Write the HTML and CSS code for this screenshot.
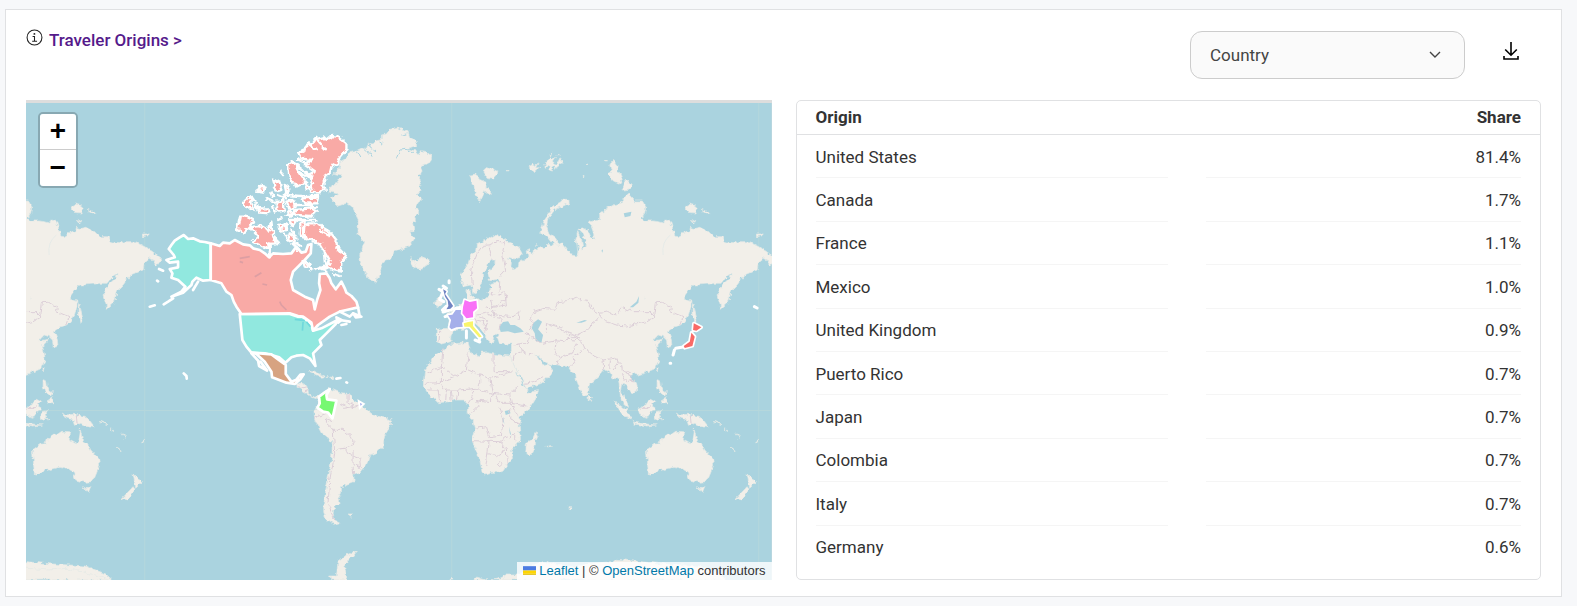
FILE: index.html
```html
<!DOCTYPE html>
<html lang="en">
<head>
<meta charset="utf-8">
<title>Traveler Origins</title>
<link rel="stylesheet" href="styles.css">
</head>
<body>
<main class="card">
  <header class="card-header">
    <div class="title">
      <svg class="info-icon" viewBox="0 0 16 16" aria-hidden="true"><circle cx="8" cy="8" r="7"/><path d="M6.2 7H8v4.5M5.800 11.500h4.600"/><circle class="dot" cx="7.900" cy="4.600" r=".9"/></svg>
      <a class="title-link" href="#origins">Traveler Origins &gt;</a>
    </div>
    <div class="actions">
      <div class="select-wrap">
        <select class="select" aria-label="Origin level"><option>Country</option><option>State</option></select>
        <svg class="chevron" viewBox="0 0 12 8" aria-hidden="true"><path d="M1 1l5 5 5-5"/></svg>
      </div>
      <button class="download" type="button" aria-label="Download">
        <svg viewBox="0 0 16 18" aria-hidden="true"><path d="M8 0v13M2.200 7.500L8 13.200l5.800-5.700M1 14v3h14v-3"/></svg>
      </button>
    </div>
  </header>
  <div class="content">
    <section class="map" aria-label="Map of traveler origins">
      <svg class="map-canvas" viewBox="26 100 746 480" preserveAspectRatio="xMidYMid slice" aria-hidden="true">
        <defs>
          <filter id="coast" x="-5%" y="-5%" width="110%" height="110%">
            <feTurbulence type="fractalNoise" baseFrequency=".07" numOctaves="2" seed="4"/>
            <feDisplacementMap in="SourceGraphic" scale="16" xChannelSelector="R" yChannelSelector="G"/>
          </filter>
          <g id="east" transform="translate(400 220) scale(.33333)">
            <g class="land">
              <path d="M183 170L190 150 205 130 213 105 228 92 230 75 245 68 250 60 262 58 275 48 285 52 292 44 303 50 315 58 335 72 358 85 367 100 362 112 345 117 325 112 335 125 333 140 342 146 355 140 358 125 372 122 385 112 382 90 390 86 395 100 403 98 405 88 430 82 445 73 460 76 463 65 475 70 485 66 498 82 515 105 530 108 538 90 528 60 534 35 545 60 550 88 560 75 552 45 535 28 548 24 565 32 575 55 586 60 580 35 570 5 600 0 600-18 622-35 642-45 668-52 678-72 686-78 705-57 728-57 738-40 735-22 725-5 735 3 760 3 775 5 792 10 798 0 812 5 818 25 822 48 835 50 850 40 870 35 872 22 885 25 900 22 920 32 930 35 945 50 970 50 975 65 1000 68 1020 65 1050 65 1080 80 1103 97 1127 115 1112 137 1100 120 1090 115 1077 125 1072 150 1032 167 1012 195 992 215 982 250 964 265 952 225 967 195 992 172 994 160 977 172 964 190 942 190 920 193 882 195 865 212 850 235 877 245 872 265 867 285 855 305 842 315 822 322 806 333 815 360 817 378 803 382 800 360 790 350 775 345 760 362 790 358 770 378 775 398 778 420 765 445 735 458 715 465 700 460 692 472 710 492 714 508 697 522 690 510 675 495 668 492 665 512 672 530 684 548 686 565 672 553 662 530 658 490 655 475 640 480 632 458 615 448 605 460 590 475 568 495 567 515 555 530 545 517 530 480 528 462 515 455 505 440 475 435 450 432 435 425 405 402 415 415 428 433 438 437 442 427 460 452 442 475 425 490 378 506 372 485 350 450 335 420 330 412 338 395 338 372 320 372 300 372 292 350 300 340 292 338 282 348 278 372 262 357 255 345 240 322 220 305 205 318 192 327 165 330 155 345 150 365 125 372 110 362 110 328 145 325 150 290 135 285 150 278 180 255 200 245 205 225 198 215 210 208 215 230 235 240 265 235 265 215 280 205 270 190 300 186 298 178 270 182 266 165 275 145 287 125 275 118 265 128 262 145 248 160 248 190 230 215 220 220 213 195 190 200Z"/>
              <path d="M150 372L205 368 210 385 215 400 240 410 245 400 260 398 300 405 330 408 340 430 355 465 370 495 385 517 416 512 410 530 385 570 362 592 358 612 362 660 335 690 338 715 320 735 310 750 295 757 270 757 255 762 248 758 240 720 230 692 218 660 226 630 220 605 205 580 207 555 190 540 165 540 150 545 115 548 85 520 70 498 75 450 90 430 105 405 125 395Z"/>
              <path d="M378 700L380 668 398 658 408 635 413 650 405 680 392 706ZM105 255L105 245 120 232 128 245 120 260ZM33 118L48 125 72 112 86 130 62 148 42 142ZM438-8L422 35 432 48 448 55 460 70 480 78 468 55 448 40 440 20 445-5 465-30 508-50 508-62 492-62 455-35ZM210-135L235-138 238-122 262-112 258-98 278-80 270-75 255-88 240-55 225-85ZM250-148L262-158 295-142 280-125 262-128ZM388-160L400-168 402-160 415-170 408-158 420-155 405-150 400-145ZM435-170L448-178 450-188 456-180 470-188 460-172 468-168 455-158 462-150 450-152 446-162 440-158ZM464-165L478-172 484-184 490-172 480-165 468-155ZM450-198L458-200 456-194ZM474-196L482-196ZM640-180L650-172 655-160 650-145 660-140 668-120 660-108 640-118 625-140 635-145 630-165ZM680-122L695-105 690-92 667-90ZM858-42L870-48 885-44 896-34 885-18 865-20ZM905-32L928-22 922-18 908-24ZM875-2L888 5 885 10ZM1070 42L1088 42 1086 48 1070 50ZM880 250L892 300 886 308 880 280ZM565 525L575 535 570 543 565 538ZM770 445L778 438 776 455ZM772 478L782 482 785 505 800 515 795 525 778 515 772 500ZM785 540L800 530 803 548 790 548ZM642 543L660 555 690 580 698 600 672 590ZM697 606L740 612 770 615 740 618 705 612ZM715 565L738 558 752 538 765 545 758 555 762 565 745 592 720 585ZM768 575L788 572 775 580 778 588 790 600 780 595 772 605 766 590ZM830 576L840 585 865 583 900 590 912 605 925 622 905 620 885 610 868 618 862 600 840 592ZM740 690L765 672 780 672 785 655 805 642 812 645 828 634 855 635 852 650 850 660 872 672 880 655 884 630 890 660 905 670 915 690 938 715 942 735 928 770 920 785 895 787 870 780 862 755 850 748 822 742 795 748 770 755 752 762 746 760ZM895 800L904 806 916 800 908 820ZM1042 762L1058 778 1070 785 1050 805ZM1042 800L1048 808 1025 840 1008 836ZM508 860L516 860 514 868 508 868ZM150 1080L155 1075 160 1080ZM222 1080L230 1072 260 1080 295 1078 320 1065 360 1065 400 1035 430 1025 470 1035 520 1040 580 1030 640 1025 650 1018 675 1020 720 1025 800 1032 900 1038 960 1062 980 1080Z"/>
              <path d="M700 1080L702 1045 725 1045 790 1050 845 1045 900 1058 950 1070 975 1080Z"/>
              <path class="specks" d="M995 683l10 8M1066 668l10-8M945 605l20 8M975 625l8 8M1010 640l8 14M320-148h4M560-167h4M548-130h4M618-178h4M408 75h4M440 680l14-2M735 235v2"/>
            </g>
            <g class="sea">
              <path d="M298 320L310 306 325 304 332 315 345 315 362 325 372 335 345 340 325 334 303 336ZM400 310L415 298 427 305 415 328 430 345 425 368 408 362 405 340 396 325ZM690 262L710 245 718 228 716 248 700 262ZM530 308L555 300 562 302 545 308ZM315 573L330 570 332 580 318 585ZM310 590L314 612 308 600ZM328 620L335 648 330 640ZM672-20L695-25 692-12 675-8ZM605 92L610 88 608 98Z"/>
              <path class="river" d="M790 105Q785 65 812 45M530 60L535 105"/>
            </g>
            <g class="borders">
              <path d="M218 195Q210 150 225 120 240 70 268 75L290 65 315 65 308 100 318 150 300 170M268 80L278 120M270 220L300 225 315 215 320 255 280 262 272 240M300 185L298 215M280 262L285 285 340 290 358 275 355 300M230 285L260 280 280 290 305 295 298 330M230 300L250 305 260 330M240 290L265 300 255 335M320 225L318 240 278 262M392 330L400 310 392 295 400 275 430 265 465 268 475 245 500 242 530 232 545 242 560 240 575 265 600 280 590 305 570 318 560 332 530 345 500 335 470 320 440 310 440 335M600 280L625 275 650 285 665 262 700 275 750 275 765 290 740 305 680 318 650 315 620 305 600 285M765 285L770 248 785 247 815 260 812 275 850 290 840 315M430 370L470 362 490 365 510 355 515 340 550 370 555 382 540 400 520 410 525 430 505 440M470 362L465 395 480 415 470 435M480 415L515 400 530 370M500 342L515 350 540 350 525 360 505 358M552 382L580 405 610 420 645 415 665 435 668 450 690 455M610 420L612 450M632 420L630 445M650 415L655 430 640 450M665 460L680 485 705 480M675 455L690 462 700 490M345 375L362 370 385 370 390 345 375 340M360 372L365 392 345 400 340 420M365 392L385 405 400 402M385 345L425 370M375 490L400 485 430 470M120 330L118 365M220 280L232 310M255 260L275 270 285 285"/>
              <path d="M130 385L125 440 80 460M125 440L165 470 200 450 205 400M205 450L240 465 270 475 335 455M283 403L283 455 330 455M240 465L240 490 230 505 275 520 330 525 355 500M270 475L278 520M75 490L120 488 165 470M125 440L125 488M120 488L135 510 180 510 230 505M85 510L115 510 120 545M140 510L138 540M155 510L157 540M175 510L170 540M225 510L215 535 205 550M230 540L275 545 280 520M230 540L235 560 215 578M330 525L335 550 380 558M335 550L358 595M285 520L300 550 335 550M225 625L260 620 270 650 305 645 310 600 300 560M218 662L300 665 320 650M268 662L265 695 258 738M265 700L290 710 320 690 322 735M300 665L320 690M292 732L300 725 308 732 300 740ZM330 565L330 600 358 612M330 655L345 640 345 665M875 585L877 615M725 565L745 565 755 550"/>
            </g>
          </g>
        </defs>
        <rect class="void" x="26" y="100" width="746" height="480"/>
        <rect class="ocean" x="26" y="103" width="746" height="477"/>
        <path class="grid" d="M145 103v477M452 103v477M759 103v477M26 410.500h746"/>
        <use href="#east"/>
        <use href="#east" x="-614"/>
        <g transform="translate(230 120) scale(.33333)">
          <g class="land">
            <path d="M293 205L320 190 335 168 310 162 330 145 330 125 350 115 358 95 380 92 400 82 410 88 415 70 430 72 440 62 455 60 455 45 470 42 480 28 505 24 535 35 540 52 560 65 560 78 530 85 558 92 565 108 572 92 590 95 607 110 600 128 575 135 580 155 565 165 575 180 566 195 574 210 562 220 572 240 560 260 567 280 554 292 558 302 548 308 553 335 540 335 555 355 545 370 535 380 520 385 495 392 490 405 480 420 460 425 450 455 440 487 415 475 400 445 392 425 390 405 405 365 385 345 385 295 370 265 350 250 325 258 302 235 325 222 298 215ZM543 415L560 425 575 412 590 415 597 430 575 447 552 440 558 430Z"/>
            <path d="M190 785L215 790 235 800 235 818 255 832 270 825 285 818 300 805 330 818 355 820 370 840 405 865 430 885 460 892 485 900 485 915 465 945 460 980 445 995 420 1005 410 1035 390 1060 372 1065 373 1085 335 1100 335 1120 325 1135 328 1150 312 1162 310 1180 315 1200 330 1208 312 1213 290 1200 282 1180 282 1150 290 1100 300 1050 307 1000 307 965 275 940 255 900 253 875 270 840 248 832 225 815 200 798ZM235 752L255 752 285 770 280 775ZM290 770L310 772 305 780ZM355 1182L370 1182 362 1188ZM380 1292L350 1305 325 1325 320 1365 300 1365 303 1380 353 1380 345 1340Z"/>
            <path class="faint" d="M500 115L510 90 530 88 550 96M418 70L422 85 436 92M400 85L412 98 425 100 430 110M383 95L390 108M445 62L458 72M515 45L530 42"/>
          </g>
          <g class="borders"><path d="M200 790L212 805 235 800M225 815L235 812M253 895L290 880 315 870M355 820L355 850 375 860M330 850L350 860M340 865L395 855M310 905L290 895 290 910 310 928 340 928 365 950 372 975 345 980M320 988L345 985 350 1000 390 1015 392 1040 370 1035 370 990M310 925L315 1000 300 1080 295 1150 315 1200M375 1035L392 1045M370 1040L372 1065"/></g>
          <g class="us">
            <path d="M-57 370L-75 366-90 364-110 355-125 357-138 345-150 352-165 362-175 375-183 387-168 405-165 412-190 420-180 428-155 425-155 442-180 447-172 460-175 473-155 480-133 500-145 515-175 530-140 518-115 495-112 485-100 473-80 482-57 480Z"/>
            <path d="M30 582L180 582 205 590 218 590 245 612 250 632 275 625 318 603 318 612 290 640 270 660 275 675 250 700 257 738 240 715 220 705 200 707 185 712 167 728 148 712 125 705 105 700 65 698 50 680 38 660Z"/>
            <path class="island" d="M-212 447L-200 452M-218 482L-215 484M-240 560L-225 556M-198 553L-185 545-170 535M-138 760L-130 768-129 776M320 776L332 774M350 787L352 788M-95 485L-110 510"/>
          </g>
          <path class="mx" d="M68 698L125 703 145 718 168 735 168 762 185 785 200 779 212 764 222 763 212 778 195 792 170 788 127 772 125 755 105 725 80 702Z"/>
          <path class="mx island" d="M65 700L85 722 88 738 112 752 92 725"/>
          <path class="co" d="M285 817L300 807 290 825 292 838 320 842 315 865 308 895 295 878 280 875 263 863 270 850 268 830Z"/>
          <g class="ca">
            <path d="M-57 370L-30 378-20 368 0 370 15 360 40 373 60 376 70 385 90 390 105 400 118 412 130 400 160 402 185 400 200 380 215 398 228 395 235 375 245 372 243 400 225 420 205 440 190 455 183 480 190 510 225 530 250 540 255 568 262 540 272 510 268 490 270 462 290 460 300 475 305 490 318 508 335 485 345 505 350 518 365 528 380 545 385 562 350 570 330 575 300 590 265 615 250 632 245 608 220 590 205 588 180 580 35 582 20 560 12 545 5 525-10 515-25 490-57 480Z"/>
            <g class="rough">
              <path d="M205 100L225 90 225 80 245 72 255 58 280 52 290 62 305 48 325 50 350 70 350 88 330 110 325 130 305 140 300 160 285 170 280 195 285 210 265 218 240 215 250 190 235 165 255 155 225 135 245 120 212 115Z"/>
              <path d="M175 135L192 125 205 150 215 165 225 180 220 190 200 200 180 175ZM225 185L240 200 230 210ZM218 235L265 233 260 250 225 250ZM195 270L245 265 262 275 240 288 200 285ZM130 178L150 190 155 210 140 215ZM165 195L180 205 170 220ZM85 195L105 200 100 218 80 215 95 205ZM38 250L60 228 72 238 60 248 75 270 45 258ZM75 250L90 265 120 265 118 280 90 278ZM140 255L160 235 165 270 145 275ZM170 245L190 240 195 260 180 270ZM175 275L195 280 180 290ZM30 290L50 290 70 300 60 320 40 340 22 328ZM62 322L85 318 105 322 115 335 125 305 130 345 138 370 115 372 118 385 95 378 68 365 85 350ZM145 315L170 310 172 330 150 332ZM178 300L200 300 188 318ZM180 340L195 350 190 370 175 360ZM212 310L225 302 222 340 230 358 210 345ZM235 310L265 310 275 320 300 335 320 360 322 380 350 410 335 425 333 455 310 450 290 440 300 420 285 395 270 370 245 358 222 355 222 320ZM218 420L235 425 245 445 225 440ZM270 445L285 442 290 450Z"/>
              <path class="island" d="M205 118L240 135M200 135L225 155 245 170M235 70L260 90M265 62L285 85M215 160L245 175M185 120L190 135M152 155L160 165M125 215L130 230M72 235L78 245M110 235L130 245 150 245M130 258L135 275M145 225L170 235M165 225L215 228 265 228M195 255L250 255M170 285L200 285M155 325L175 312M145 300L155 295M165 340L170 355M185 330L200 355M205 300L260 300M120 370L120 412M135 350L145 370M190 365L205 395M200 370L215 380M225 425L245 448M255 450L280 440M250 368L275 370M285 400L290 440M310 462L330 468M240 260L260 262M235 290L250 290M270 330L300 345M320 385L335 400M275 195L290 180"/>
            </g>
            <path d="M320 592L335 600 325 608ZM370 580L395 590 378 592Z"/>
            <path class="island" d="M330 575L360 590 370 580M330 600L360 605M335 615L350 612M385 562L390 590"/>
          </g>
          <path class="lakes" d="M30 415L60 410M40 428L30 425M75 470L95 458M98 492L112 495M150 545L155 555 170 570"/>
          <path class="great" d="M195 598L225 602M220 606L218 632M230 605L242 620"/>
        </g>
        <g transform="translate(400 220) scale(.33333)">
          <path class="halo" d="M148 182V188M130 198L140 205M118 208L130 215 120 238 132 245M128 270L140 258M130 276L150 270 180 262M136 290L150 286M200 332V354M226 360L240 366M240 350L238 365M824 390L820 405M828 385L855 380M1064 260L1072 264M811 430H813"/>
          <path class="uk" d="M130 208L140 214 136 222 148 240 160 258 152 266 140 268 146 258 144 242 136 230Z"/>
          <path class="fr" d="M184 270L190 282 192 320 170 322 155 328 149 322 154 300 145 286 158 284 168 270Z"/>
          <path class="de" d="M195 240L210 246 230 242 232 265 220 275 220 292 200 295 188 280 190 260Z"/>
          <path class="it" d="M192 310L205 306 220 304 220 318 240 342 246 350 238 352 226 338 210 320 194 320Z"/>
          <path class="jp" d="M882 310L905 322 890 332 880 330ZM875 338L885 350 878 378 855 384 852 378 870 365Z"/>
        </g>
        <path class="guiana" d="M359 401l5 3-4 4z"/>
      </svg>
      <div class="zoom">
        <button class="zoom-button" type="button" aria-label="Zoom in">+</button>
        <button class="zoom-button" type="button" aria-label="Zoom out">−</button>
      </div>
      <div class="attribution">
        <a href="#leaflet"><svg class="flag" viewBox="0 0 12 8" aria-hidden="true"><path fill="#4c7be1" d="M0 0h12v4H0z"/><path fill="#ffd500" d="M0 4h12v3H0z"/><path fill="#e0bc00" d="M0 7h12v1H0z"/></svg> Leaflet</a> | © <a href="#osm">OpenStreetMap</a> contributors
      </div>
    </section>
    <section class="panel">
      <table class="origins">
        <thead><tr><th scope="col">Origin</th><th scope="col">Share</th></tr></thead>
        <tbody>
          <tr><td>United States</td><td>81.4%</td></tr>
          <tr><td>Canada</td><td>1.7%</td></tr>
          <tr><td>France</td><td>1.1%</td></tr>
          <tr><td>Mexico</td><td>1.0%</td></tr>
          <tr><td>United Kingdom</td><td>0.9%</td></tr>
          <tr><td>Puerto Rico</td><td>0.7%</td></tr>
          <tr><td>Japan</td><td>0.7%</td></tr>
          <tr><td>Colombia</td><td>0.7%</td></tr>
          <tr><td>Italy</td><td>0.7%</td></tr>
          <tr><td>Germany</td><td>0.6%</td></tr>
        </tbody>
      </table>
    </section>
  </div>
</main>
</body>
</html>
```
FILE: styles.css
```css
* { box-sizing: border-box; }
body {
  margin: 0;
  padding: 9px 15px 9px 5px;
  background: #f7f8fa;
  color: #333;
  font: 17px/24px Roboto, "Noto Sans", sans-serif;
}
.card {
  padding: 21px 20px 16px;
  border: 1px solid #e0e1e3;
  background: #fff;
}
.card-header {
  display: flex;
  justify-content: space-between;
  align-items: flex-start;
  margin-bottom: 21px;
}
.title { display: flex; gap: 6px; }
.info-icon {
  width: 17px;
  height: 17px;
  margin-top: -2px;
  fill: none;
  stroke: #222;
  stroke-width: 1;
}
.info-icon .dot { fill: #222; stroke: none; }
.title-link { color: #551a8b; font-weight: 500; line-height: 18px; text-decoration: none; }
.actions { display: flex; gap: 36px; }
.select-wrap { position: relative; width: 275px; }
.select {
  display: block;
  width: 100%;
  height: 48px;
  padding: 0 19px;
  appearance: none;
  border: 1px solid #ccc;
  border-radius: 12px;
  background: #fafafa;
  color: #444;
  font: inherit;
}
.chevron {
  position: absolute;
  top: 20px;
  right: 24px;
  width: 12px;
  height: 8px;
  fill: none;
  stroke: #444;
  stroke-width: 1.4;
  pointer-events: none;
}
.download {
  width: 20px;
  height: 40px;
  margin-right: 20px;
  padding: 0;
  border: 0;
  background: none;
}
.download svg { display: block; width: 16px; height: 18px; margin: 0 auto; fill: none; stroke: #000; stroke-width: 1.6; }

.content { display: grid; grid-template-columns: 1fr 1fr; gap: 24px; }
.map { position: relative; min-height: 480px; overflow: hidden; background: #ddd; }
.map-canvas { position: absolute; inset: 0; width: 100%; height: 100%; }
.void { fill: #ddd; }
.ocean { fill: #aad3df; }
.grid { fill: none; stroke: #b5d7dc; stroke-width: 1; }
.land { fill: #f2efe9; stroke: #e2e8e5; stroke-width: 2; stroke-linejoin: round; filter: url(#coast); }
.land .faint { fill: none; stroke: #aad3df; stroke-width: 3; }
.land .specks { fill: none; stroke: #dfe8e5; stroke-width: 4; stroke-linecap: round; }
.sea { fill: #aad3df; }
.sea .river { fill: none; stroke: #dfe8e7; stroke-width: 2; }
.borders { fill: none; stroke: #dccfd8; stroke-width: 3; stroke-linejoin: round; filter: url(#coast); }
.us, .ca, .mx, .co { stroke: #fff; stroke-width: 8; stroke-linejoin: round; stroke-linecap: round; }
.us { fill: #91e8df; }
.ca { fill: #f9aaa6; }
.rough { stroke-width: 7; filter: url(#coast); }
.mx { fill: #d7a381; }
.co { fill: #76f872; }
.uk, .fr, .de, .it, .jp { stroke: #fff; stroke-width: 10; stroke-linejoin: round; paint-order: stroke; }
.uk { fill: #7084c2; }
.fr { fill: #a5afea; }
.de { fill: #f971f7; }
.it { fill: #f9f56b; }
.jp { fill: #f96a66; }
.island { fill: none; }
.halo { fill: none; stroke: #fff; stroke-width: 9; stroke-linecap: round; stroke-linejoin: round; }
.lakes { fill: none; stroke: #a98a9d; stroke-opacity: .35; stroke-width: 5; }
.great { fill: none; stroke: #6fd8dc; stroke-width: 5; }
.guiana { fill: #a5afea; stroke: #fff; stroke-width: 2; }

.zoom {
  position: absolute;
  top: 12px;
  left: 12px;
  display: grid;
  border: 2px solid rgba(0, 0, 0, .2);
  border-radius: 5px;
  background-clip: padding-box;
}
.zoom-button {
  width: 36px;
  height: 36px;
  padding: 3px 0 0;
  border: 0;
  border-radius: 0 0 3px 3px;
  background: #fff;
  color: #000;
  font: bold 28px/32px "Liberation Mono", monospace;
}
.zoom-button:first-child { border-bottom: 1px solid #ccc; border-radius: 3px 3px 0 0; }
.attribution {
  position: absolute;
  right: 0;
  bottom: 0;
  padding: 0 6px;
  background: rgba(255, 255, 255, .8);
  color: #333;
  font: 13px/18px "Liberation Sans", Arial, sans-serif;
  white-space: nowrap;
}
.attribution a { color: #0078a8; text-decoration: none; }
.flag { width: 13px; height: 9px; }

.panel {
  padding-bottom: 10px;
  border: 1px solid #e0e1e3;
  border-radius: 5px;
}
.origins { width: 100%; height: 100%; border-collapse: separate; border-spacing: 0; }
.origins th {
  height: 34px;
  padding: 0 19px 2px;
  border-bottom: 1px solid #e0e1e3;
  font-weight: 700;
  text-align: left;
}
.origins th:first-child { width: 52.5%; }
.origins td {
  height: 43px;
  padding: 0 19px;
  background: linear-gradient(#f5f5f5, #f5f5f5) bottom / 100% 1px no-repeat content-box;
}
.origins tr > :last-child { text-align: right; }
.origins tr:last-child td { background: none; }
```
